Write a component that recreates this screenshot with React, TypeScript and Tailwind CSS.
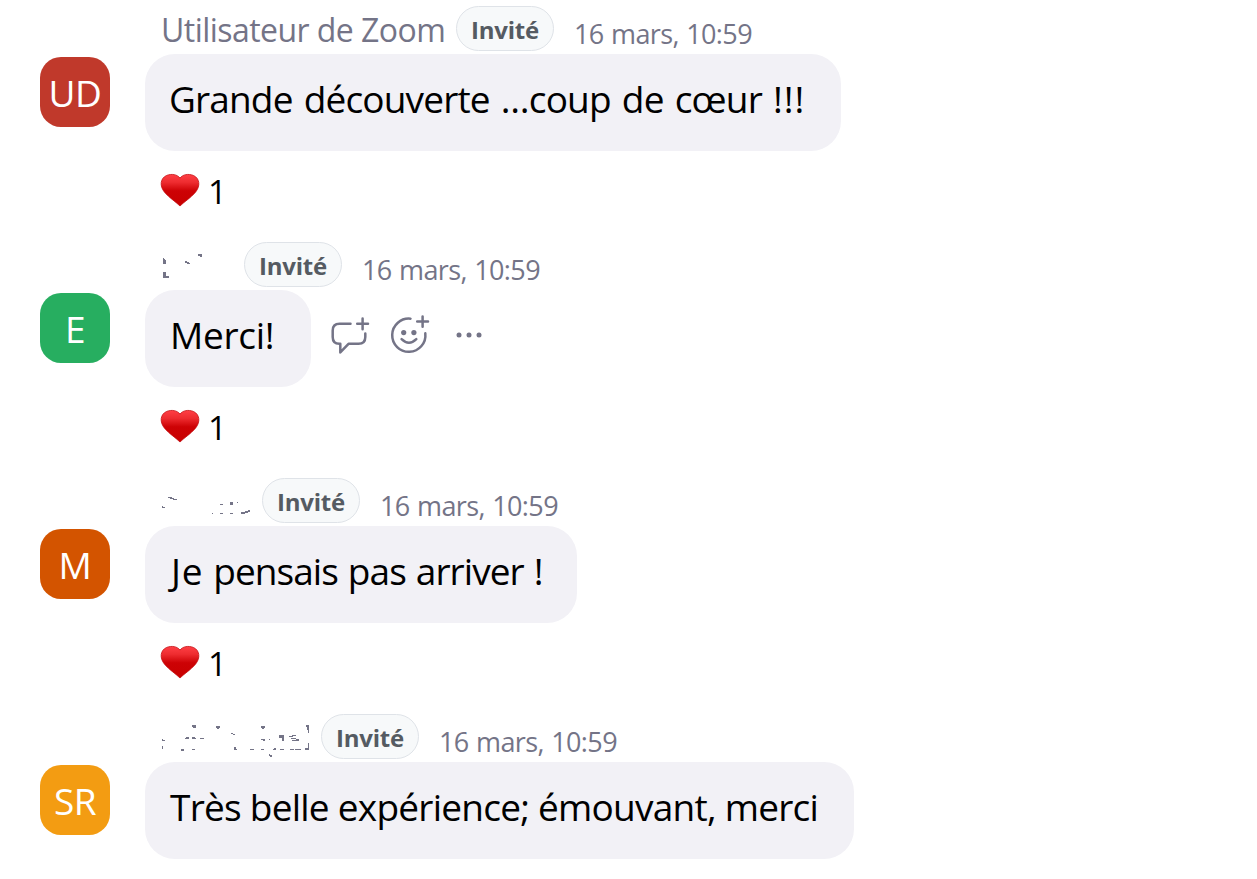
import type { ReactNode } from "react";

type Message = {
  initials: string;
  color: string;
  name: ReactNode;
  nameWidth: string;
  text: ReactNode;
  textClass: string;
  bubbleWidth: string;
  liked?: boolean;
  hovered?: boolean;
};

// Names are erased: only a few specks of each one are left
const NameSpecks = ({ d, width }: { d: string; width: number }) => (
  <svg width={width} height={45} viewBox={`0 0 ${width} 45`} fill="#747487" shapeRendering="crispEdges">
    <path d={d} />
  </svg>
);

const HeartIcon = () => (
  <svg width="40" height="34" viewBox="0 0 40 34">
    <defs>
      <linearGradient id="heart" x1="0" y1="0" x2="0" y2="1">
        <stop offset="0" stopColor="#ff3f45" />
        <stop offset="0.25" stopColor="#ee2c30" />
        <stop offset="0.52" stopColor="#cd0205" />
        <stop offset="1" stopColor="#c80000" />
      </linearGradient>
    </defs>
    <path
      d="M20 33C16 29 9 24.600 4.500 19.200C-.8 12.800.5 5.100 6.500 2.500C11.500.4 17.300 1.400 20 5.100C22.700 1.400 28.500.4 33.500 2.500C39.500 5.100 40.800 12.800 35.500 19.200C31 24.600 24 29 20 33Z"
      fill="url(#heart)"
      stroke="#c40c10"
      strokeWidth="0.8"
    />
  </svg>
);

const ReplyIcon = () => (
  <svg width="40" height="40" viewBox="0 0 40 40" fill="none" stroke="#747487" strokeWidth="2.5" strokeLinecap="round" strokeLinejoin="round">
    <path d="M20.500 8.700H9.500Q2.700 8.700 2.700 15.500V22Q2.700 28.800 9.300 28.800H10.300V37.400L18.500 28.800H28.500Q35.300 28.800 35.300 22V18.500" />
    <path d="M32.600 3.500V14.200M27.200 8.800H38" />
  </svg>
);

const ReactIcon = () => (
  <svg width="40" height="40" viewBox="0 0 40 40" fill="none" stroke="#747487" strokeWidth="2.5" strokeLinecap="round">
    <path d="M20.500 3.700A16.600 16.600 0 1 0 35.300 18.300" />
    <path d="M11.600 24.200Q19 31.300 26.300 24.200" />
    <path d="M32.600 1.400V11.800M27.200 6.500H38" />
    <circle cx="13.700" cy="17.600" r="2.600" fill="#747487" stroke="none" />
    <circle cx="23.900" cy="17.600" r="2.600" fill="#747487" stroke="none" />
  </svg>
);

const MoreIcon = () => (
  <svg width="28" height="8" viewBox="0 0 28 8" fill="#747487">
    <circle cx="4" cy="4" r="2.500" />
    <circle cx="14" cy="4" r="2.500" />
    <circle cx="24" cy="4" r="2.500" />
  </svg>
);

const messages: Message[] = [
  {
    initials: "UD",
    color: "bg-[#c0392b]",
    name: "Utilisateur de Zoom",
    nameWidth: "w-[295px]",
    text: (
      <>
        Grande découverte …coup de cœur <span className="tracking-[0.9px]">!!!</span>
      </>
    ),
    textClass: "pl-[24px] tracking-[-0.85px] [word-spacing:2.4px]",
    bubbleWidth: "w-[696px]",
    liked: true,
  },
  {
    initials: "E",
    color: "bg-[#27ae60]",
    name: <NameSpecks width={83} d="M2 16h1v1h1v1h1v4h-3zM2 30h3v4h3v2h-6zM24 19h2v1h2v1h1v1h-3v-1h-2zM37 12h4v3h-2v-1h-2z" />,
    nameWidth: "w-[83px]",
    text: "Merci!",
    textClass: "pl-[25px] tracking-[-0.3px]",
    bubbleWidth: "w-[166px]",
    liked: true,
    hovered: true,
  },
  {
    initials: "M",
    color: "bg-[#d35400]",
    name: (
      <NameSpecks
        width={101}
        d="M7 19h4v1h2v1h3v1h-4v-1h-3v-1h-2zM1 28h1v1h2v1h-3zM51 35h1v1h-1zM59 26h3v1h-3zM59 35h3v1h-3zM69 24h3v3h-3zM69 35h3v1h-3zM76 24h1v1h-1zM80 34h4v-1h3v-1h2v2h-2v1h-3v1h-4z"
      />
    ),
    nameWidth: "w-[101px]",
    text: (
      <>
        <span className="tracking-[0.8px]">Je</span> pensais pas arriver !
      </>
    ),
    textClass: "pl-[26px] tracking-[-0.95px] [word-spacing:1.3px]",
    bubbleWidth: "w-[432px]",
    liked: true,
  },
  {
    initials: "SR",
    color: "bg-[#f39c12]",
    name: (
      <NameSpecks
        width={160}
        d="M1 25h1v1h2v1h-3zM1 32h1v3h-1zM19 36h1v-1h3v2h-3zM24 24h1v-1h3v2h-4zM31 11h4v3h-3v-1h-1zM31 23h3v1h1v1h-4zM31 35h3v1h-3zM39 24h4v1h-4zM55 12h4v2h-1v1h-2v-1h-1zM70 19h2v1h2v1h-2v-1h-2zM73 33h2v2h1v1h-3zM89 35h4v1h-4zM100 12h4v2h-1v1h-2v-1h-1zM100 25h4v2h-2v-1h-2zM100 35h3v1h-3zM108 25h1v1h-1zM108 40h1v1h2v2h-2v-1h-1zM112 35h1v-1h2v2h-3zM118 21h5v6h-2v-3h-3zM119 35h4v1h-4zM128 22h3v-1h4v1h-3v1h-4zM130 24h5v1h3v2h-7v-1h4v-1h-5zM129 35h4v1h-4zM134 35h6v1h-6zM145 11h3v8h-1v-3h-1v-3h-1zM147 29h1v7h-4v-2h3z"
      />
    ),
    nameWidth: "w-[160px]",
    text: "Très belle expérience; émouvant, merci",
    textClass: "pl-[25px] tracking-[-0.75px]",
    bubbleWidth: "w-[709px]",
  },
];

const MessageRow = ({ message }: { message: Message }) => (
  <article className="flex h-[236px] pl-10">
    <div
      className={`mt-[51px] flex size-[70px] shrink-0 items-center justify-center rounded-[21px] text-[37px] leading-none tracking-[-0.5px] text-white ${message.color}`}
    >
      {message.initials}
    </div>

    <div className="ml-[35px]">
      <header className="flex h-12 pl-4 whitespace-nowrap text-[#747487]">
        <div className={`shrink-0 text-[32px] leading-[48px] tracking-[-0.55px] ${message.nameWidth}`}>{message.name}</div>
        <span className="flex h-[45px] w-[98px] items-center justify-center rounded-full border border-[#dfe3e8] bg-[#f7f9fa] pt-0.5 text-[24px] font-bold tracking-[-0.2px] text-[#555b62]">
          Invité
        </span>
        <time className="ml-[20px] pt-[7px] text-[27px] leading-[42px] tracking-[-0.6px] [word-spacing:0.9px]">16 mars, 10:59</time>
      </header>

      <div className="flex">
        <p
          className={`h-[97px] shrink-0 rounded-[30px] bg-[#f2f1f6] text-[37px] leading-[90px] whitespace-nowrap text-black ${message.textClass} ${message.bubbleWidth}`}
        >
          {message.text}
        </p>
        {message.hovered && (
          <div className="flex h-[90px] items-center pl-[19px]">
            <ReplyIcon />
            <div className="ml-5">
              <ReactIcon />
            </div>
            <div className="ml-[25px]">
              <MoreIcon />
            </div>
          </div>
        )}
      </div>

      {message.liked && (
        <div className="flex pt-[22px] pl-[15px]">
          <HeartIcon />
          <span className="ml-2 text-[33px] leading-[38px] text-black">1</span>
        </div>
      )}
    </div>
  </article>
);

const App = () => (
  <main className="h-[879px] w-[1257px] overflow-hidden bg-white pt-1.5 font-['Open_Sans','Noto_Sans',sans-serif]">
    {messages.map((message) => (
      <MessageRow key={message.initials} message={message} />
    ))}
  </main>
);

export default App;
